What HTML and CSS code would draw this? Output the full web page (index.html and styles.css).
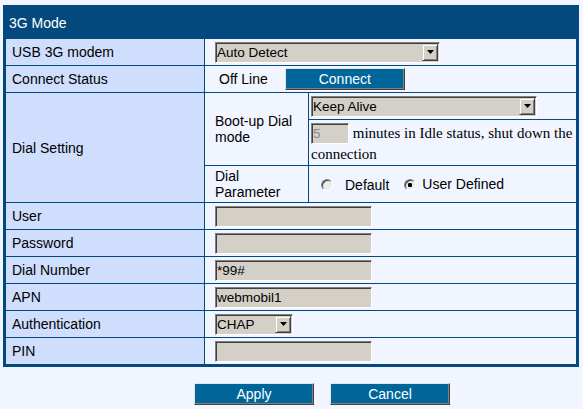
FILE: index.html
```html
<!DOCTYPE html>
<html>
<head>
<meta charset="utf-8">
<title>3G Mode</title>
<link rel="stylesheet" href="styles.css">
</head>
<body>
<table class="grid">
  <colgroup><col class="c1"><col class="c2"><col class="c3"></colgroup>
  <tr><th colspan="3" class="head">3G Mode</th></tr>
  <tr class="row">
    <td class="lab">USB 3G modem</td>
    <td colspan="2" class="val">
      <span class="sel w-usb"><select><option>Auto Detect</option></select><span class="arrow"><svg width="7" height="4" viewBox="0 0 7 4"><polygon points="0,0 7,0 3.5,4" fill="#000"/></svg></span></span>
    </td>
  </tr>
  <tr class="row">
    <td class="lab">Connect Status</td>
    <td colspan="2" class="val"><span class="status">Off Line</span><button class="btn connect" type="button">Connect</button></td>
  </tr>
  <tr class="row">
    <td class="lab" rowspan="3">Dial Setting</td>
    <td class="sub" rowspan="2">Boot-up Dial mode</td>
    <td class="val2">
      <span class="sel w-keep"><select><option>Keep Alive</option></select><span class="arrow"><svg width="7" height="4" viewBox="0 0 7 4"><polygon points="0,0 7,0 3.5,4" fill="#000"/></svg></span></span>
    </td>
  </tr>
  <tr class="row-min">
    <td class="val2 idle"><input class="txt w-min" type="text" value="5" disabled> minutes in Idle status, shut down the connection</td>
  </tr>
  <tr class="row-dp">
    <td class="sub">Dial Parameter</td>
    <td class="val2 radios"><input class="radio first" type="radio" name="dp"><span class="opt-a">Default</span><input class="radio second" type="radio" name="dp" checked><span>User Defined</span></td>
  </tr>
  <tr class="row">
    <td class="lab">User</td>
    <td colspan="2" class="val"><input class="txt w-txt" type="text" value=""></td>
  </tr>
  <tr class="row">
    <td class="lab">Password</td>
    <td colspan="2" class="val"><input class="txt w-txt" type="password" value=""></td>
  </tr>
  <tr class="row">
    <td class="lab">Dial Number</td>
    <td colspan="2" class="val"><input class="txt w-txt" type="text" value="*99#"></td>
  </tr>
  <tr class="row">
    <td class="lab">APN</td>
    <td colspan="2" class="val"><input class="txt w-txt" type="text" value="webmobil1"></td>
  </tr>
  <tr class="row">
    <td class="lab">Authentication</td>
    <td colspan="2" class="val">
      <span class="sel w-auth"><select><option>CHAP</option></select><span class="arrow"><svg width="7" height="4" viewBox="0 0 7 4"><polygon points="0,0 7,0 3.5,4" fill="#000"/></svg></span></span>
    </td>
  </tr>
  <tr class="row">
    <td class="lab">PIN</td>
    <td colspan="2" class="val"><input class="txt w-txt" type="text" value=""></td>
  </tr>
</table>
<div class="actions">
  <button class="btn" type="button">Apply</button>
  <button class="btn" type="button">Cancel</button>
</div>
</body>
</html>
```
FILE: styles.css
```css
html, body {
  margin: 0;
  background: #f0f5ff;
}
body {
  padding: 5px 0 0 3px;
  font-family: "Liberation Sans", Arial, sans-serif;
  font-size: 14px;
  color: #000;
}
.grid {
  width: 576px;
  table-layout: fixed;
  border: 2px solid #03497d;
  border-spacing: 1px;
  background: #03497d;
}
.c1 { width: 198px; }
.c2 { width: 103px; }
.c3 { width: 267px; }
.grid td, .grid th {
  box-sizing: border-box;
  padding: 0;
  font-size: 14px;
}
.grid .head {
  height: 30px;
  text-align: left;
  font-weight: normal;
  color: #fff;
  padding-left: 3px;
  background: #03497d;
}
.row td { height: 26px; }
.row-min td { height: 45px; }
.row-dp td { height: 36px; }
.grid .lab {
  background: #cfdefc;
  padding-left: 6px;
  vertical-align: middle;
}
.grid .val {
  background: #f0f5ff;
  padding-left: 10px;
  vertical-align: middle;
}
.grid .sub {
  background: #f0f5ff;
  padding-left: 10px;
  padding-right: 4px;
  line-height: 16px;
  vertical-align: middle;
}
.grid .val2 {
  background: #f0f5ff;
  padding-left: 2px;
  vertical-align: middle;
}
.grid .idle {
  font-family: "Liberation Serif", "Times New Roman", serif;
  font-size: 15px;
  line-height: 20px;
  padding-top: 1px;
}

/* select */
.sel {
  position: relative;
  display: inline-block;
  vertical-align: middle;
  height: 21px;
}
.sel select {
  -webkit-appearance: none;
  appearance: none;
  box-sizing: border-box;
  width: 100%;
  height: 21px;
  margin: 0;
  padding: 0 0 0 1px;
  font-family: "Liberation Sans", Arial, sans-serif;
  font-size: 13.5px;
  color: #000;
  background: #d4d0c8;
  border: 1px solid;
  border-color: #808080 #fff #fff #808080;
  box-shadow: inset 1px 1px #404040, inset -1px -1px #d4d0c8;
  border-radius: 0;
  outline: none;
}
.arrow {
  position: absolute;
  right: 2px;
  top: 2px;
  box-sizing: border-box;
  width: 16px;
  height: 17px;
  background: #d4d0c8;
  border: 1px solid;
  border-color: #d4d0c8 #404040 #404040 #d4d0c8;
  box-shadow: inset 1px 1px #fff, inset -1px -1px #808080;
  display: flex;
  align-items: center;
  justify-content: center;
  pointer-events: none;
}
.arrow svg { display: block; }
.w-usb { width: 225px; }
.w-keep { width: 226px; }
.w-auth { width: 78px; }

/* text inputs */
.txt {
  box-sizing: border-box;
  height: 21px;
  margin: 0;
  padding: 0 1px;
  font-family: "Liberation Sans", Arial, sans-serif;
  font-size: 13.5px;
  color: #000;
  background: #d4d0c8;
  border: 1px solid;
  border-color: #808080 #fff #fff #808080;
  box-shadow: inset 1px 1px #404040, inset -1px -1px #d4d0c8;
  border-radius: 0;
  outline: none;
  vertical-align: middle;
}
.txt:disabled { color: #8a8a8a; }
.w-txt { width: 157px; }
.w-min { width: 38px; vertical-align: baseline; }

.status { margin-left: 4px; vertical-align: middle; }

/* buttons */
.btn {
  box-sizing: border-box;
  width: 120px;
  height: 22px;
  margin: 0;
  padding: 0;
  font-family: "Liberation Sans", Arial, sans-serif;
  font-size: 14px;
  color: #fff;
  background: #006699;
  border: 1px solid;
  border-color: #e4e4e4 #404040 #404040 #e4e4e4;
  box-shadow: inset -1px -1px #808080;
  border-radius: 0;
  vertical-align: middle;
}
.connect { margin-left: 17px; }

/* radios */
.grid .radios { padding-left: 12px; }
.radio {
  -webkit-appearance: none;
  appearance: none;
  box-sizing: border-box;
  width: 12px;
  height: 12px;
  margin: 0;
  border-radius: 50%;
  border: 1px solid;
  border-color: #808080 #fff #fff #808080;
  box-shadow: inset 1px 1px #404040;
  background: #ececec;
  vertical-align: middle;
}
.radio:checked {
  background: radial-gradient(circle, #000 0 2px, #ececec 2.5px);
}
.radio.first { margin-right: 12px; }
.radio.second { margin-right: 6px; }
.opt-a { margin-right: 15px; vertical-align: middle; }
.radios span { vertical-align: middle; }

.actions {
  display: flex;
  gap: 16px;
  padding: 16px 0 0 191px;
}
```
